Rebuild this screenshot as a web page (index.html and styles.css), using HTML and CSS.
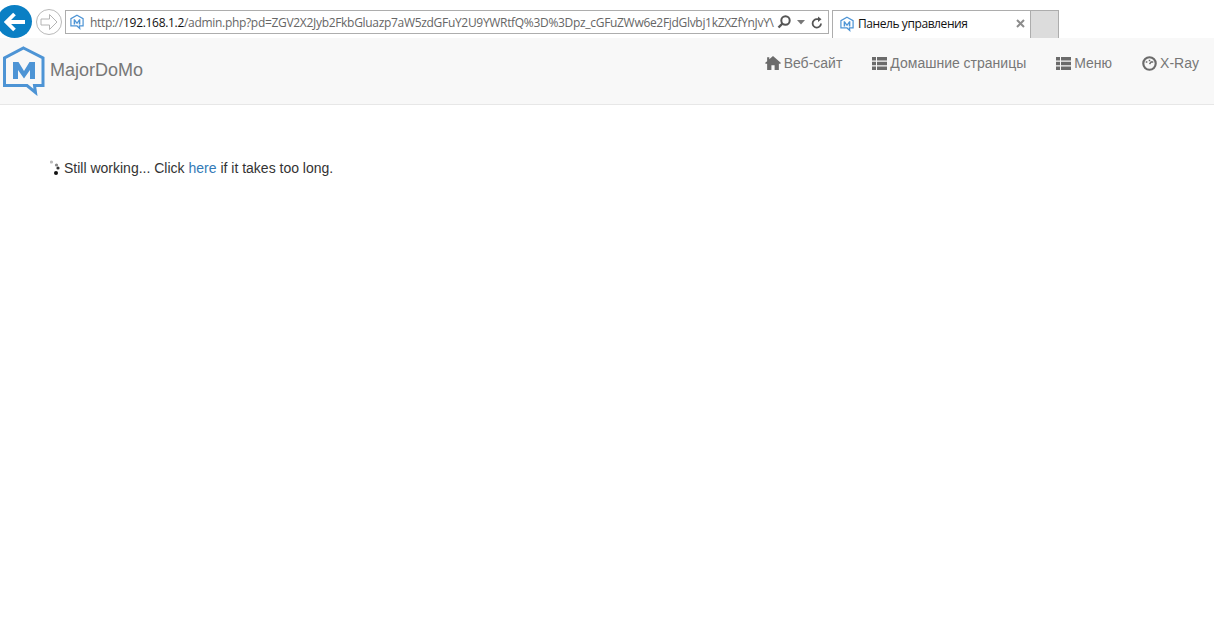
FILE: index.html
```html
<!DOCTYPE html>
<html lang="ru">
<head>
<meta charset="utf-8">
<title>Панель управления</title>
<link rel="stylesheet" href="styles.css">
</head>
<body>
<header class="chrome">
  <span class="back">
    <svg width="22" height="20" viewBox="0 0 22 20"><path d="M10.500 2 2.500 10l8 8M3 10h18" fill="none" stroke="#fff" stroke-width="3.800"/></svg>
  </span>
  <span class="forward">
    <svg width="20" height="18" viewBox="0 0 20 18"><path d="M10.500 1.500 18 9l-7.500 7.500V12H2V6h8.500z" fill="#fff" stroke="#b4b4b4" stroke-width="1"/></svg>
  </span>
  <div class="address">
    <svg class="favicon" width="14" height="16" viewBox="0 0 46 50"><path d="M23 3 43 14V38H31L32 46 23 38H3V14z" fill="#fff" stroke="#4d94d5" stroke-width="4" stroke-linejoin="miter"/><path d="M12 33V16h4l7 10 7-10h4v17h-5V24l-6 8-6-8v9z" fill="#4d94d5"/></svg>
    <span class="url"><span class="url-dim">http://</span>192.168.1.2<span class="url-dim">/admin.php?pd=ZGV2X2Jyb2FkbGluazp7aW5zdGFuY2U9YWRtfQ%3D%3Dpz_cGFuZWw6e2FjdGlvbj1kZXZfYnJvY\</span></span>
    <svg class="tool" width="14" height="14" viewBox="0 0 14 14"><circle cx="8.500" cy="5.500" r="4.200" fill="none" stroke="#555" stroke-width="2"/><path d="M5.500 8.500 1.500 12.500" stroke="#555" stroke-width="2.400"/></svg>
    <svg class="caret" width="8" height="5" viewBox="0 0 8 5"><path d="M0 0h8L4 4.500z" fill="#777"/></svg>
    <svg class="tool reload" width="12" height="13" viewBox="0 0 12 13"><path d="M10 7.500A4.200 4.200 0 1 1 6 3.200h2" fill="none" stroke="#555" stroke-width="1.800"/><path d="M7 .5 10.500 3.200 7 6z" fill="#555"/></svg>
  </div>
  <div class="tab">
    <svg class="favicon" width="14" height="16" viewBox="0 0 46 50"><path d="M23 3 43 14V38H31L32 46 23 38H3V14z" fill="#fff" stroke="#4d94d5" stroke-width="4"/><path d="M12 33V16h4l7 10 7-10h4v17h-5V24l-6 8-6-8v9z" fill="#4d94d5"/></svg>
    <span class="tab-title">Панель управления</span>
    <svg class="tab-close" width="9" height="9" viewBox="0 0 9 9"><path d="M1 1l7 7M8 1 1 8" stroke="#8c8c8c" stroke-width="2"/></svg>
  </div>
  <div class="new-tab"></div>
</header>

<nav class="navbar">
  <a class="brand">
    <svg class="logo" width="42" height="50" viewBox="0 0 42 50"><path d="M20.500 2 40 12V39.500H31.500L32.500 46.500 24 39.500H1.500V12z" fill="none" stroke="#4d94d5" stroke-width="3"/><path d="M10 33V16h5.500l5.500 9 5.500-9H32v17h-5V24l-6 8.500-6-8.500v9z" fill="#4d94d5"/></svg>
    <span class="brand-name">MajorDoMo</span>
  </a>
  <ul class="menu">
    <li class="menu-item">
      <svg class="icon" width="16" height="14" viewBox="0 0 15 13"><path d="M7.500 0 15 6.500l-.7.800H13V13H9V8.500H6V13H2V7.300H.7L0 6.500 2 4.800V1h2v2.100z" fill="#6b6b6b"/></svg>
      <span>Веб-сайт</span>
    </li>
    <li class="menu-item">
      <svg class="icon" width="15" height="13" viewBox="0 0 15 13"><path d="M0 0h4v3.500H0zM5 0h10v3.500H5zM0 4.700h4v3.600H0zM5 4.700h10v3.600H5zM0 9.500h4V13H0zM5 9.500h10V13H5z" fill="#6b6b6b"/></svg>
      <span>Домашние страницы</span>
    </li>
    <li class="menu-item">
      <svg class="icon" width="15" height="13" viewBox="0 0 15 13"><path d="M0 0h4v3.500H0zM5 0h10v3.500H5zM0 4.700h4v3.600H0zM5 4.700h10v3.600H5zM0 9.500h4V13H0zM5 9.500h10V13H5z" fill="#6b6b6b"/></svg>
      <span>Меню</span>
    </li>
    <li class="menu-item">
      <svg class="icon" width="15" height="15" viewBox="0 0 14 14"><circle cx="7" cy="7" r="5.800" fill="none" stroke="#6b6b6b" stroke-width="2"/><path d="M3.500 5.500h1.500M9 5.500h1.500M7 3.500v1.500M7 7.500 9 5" stroke="#6b6b6b" stroke-width="1.400"/></svg>
      <span>X-Ray</span>
    </li>
  </ul>
</nav>

<main class="content">
  <svg class="spinner" width="12" height="16" viewBox="0 0 12 16"><circle cx="1.500" cy="2" r="1.600" fill="#bbb"/><circle cx="6.500" cy="5" r="1.600" fill="#888"/><circle cx="8" cy="8" r="1.600" fill="#333"/><circle cx="6" cy="13" r="2" fill="#111"/></svg>
  <span>Still working... Click <a class="link">here</a> if it takes too long.</span>
</main>
</body>
</html>
```
FILE: styles.css
```css
* { box-sizing: border-box; }
html, body { margin: 0; padding: 0; background: #fff; overflow: hidden; }
body { width: 1214px; height: 630px; font-family: "Liberation Sans", Arial, sans-serif; font-size: 14px; color: #333; }

.chrome { height: 38px; display: flex; align-items: flex-start; background: #fff; overflow: hidden; }
.back { flex: none; width: 35px; height: 33px; margin: 5px 0 0 -3px; border-radius: 50%; background: #0a7fc4; display: flex; align-items: center; justify-content: center; }
.forward { flex: none; width: 26px; height: 26px; margin: 9px 0 0 4px; border: 1px solid #b9b9b9; border-radius: 50%; display: flex; align-items: center; justify-content: center; }
.address { flex: none; width: 764px; height: 24px; margin: 10px 0 0 3px; border: 1px solid #adadad; display: flex; align-items: center; padding: 0 4px 0 4px; }
.favicon { flex: none; }
.url { flex: 1; min-width: 0; margin: 0 4px 0 6px; white-space: nowrap; font-family: "Open Sans", sans-serif; font-size: 12px; letter-spacing: -0.31px; color: #111; }
.url-dim { color: #666; }
.tool { flex: none; }
.caret { flex: none; margin: 0 6px 0 6px; }
.reload { margin-right: 1px; }
.tab { flex: none; width: 199px; height: 28px; margin: 10px 0 0 3px; border: 1px solid #adadad; border-bottom: 0; display: flex; align-items: center; padding: 0 5px 2px 7px; }
.tab-title { flex: 1; margin-left: 4px; font-family: "Open Sans", sans-serif; font-size: 12px; letter-spacing: -0.42px; color: #111; }
.tab-close { flex: none; }
.new-tab { flex: none; width: 28px; height: 28px; margin-top: 10px; background: #dcdcdc; border: 1px solid #adadad; border-left: 0; border-bottom: 0; }

.navbar { height: 67px; background: #f8f8f8; border-bottom: 1px solid #e7e7e7; display: flex; justify-content: space-between; align-items: flex-start; }
.brand { display: flex; align-items: center; margin: 8px 0 0 3px; }
.brand-name { margin: 0 0 2px 5px; font-size: 18px; color: #777; }
.menu { list-style: none; margin: 15px 15px 0 0; padding: 0; display: flex; gap: 30px; }
.menu-item { display: flex; align-items: center; gap: 3px; font-size: 14px; line-height: 20px; color: #777; }
.icon { flex: none; }

.content { margin: 53px 0 0 50px; display: flex; align-items: center; line-height: 20px; color: #333; }
.spinner { flex: none; margin-right: 2px; }
.link { color: #337ab7; }
```
